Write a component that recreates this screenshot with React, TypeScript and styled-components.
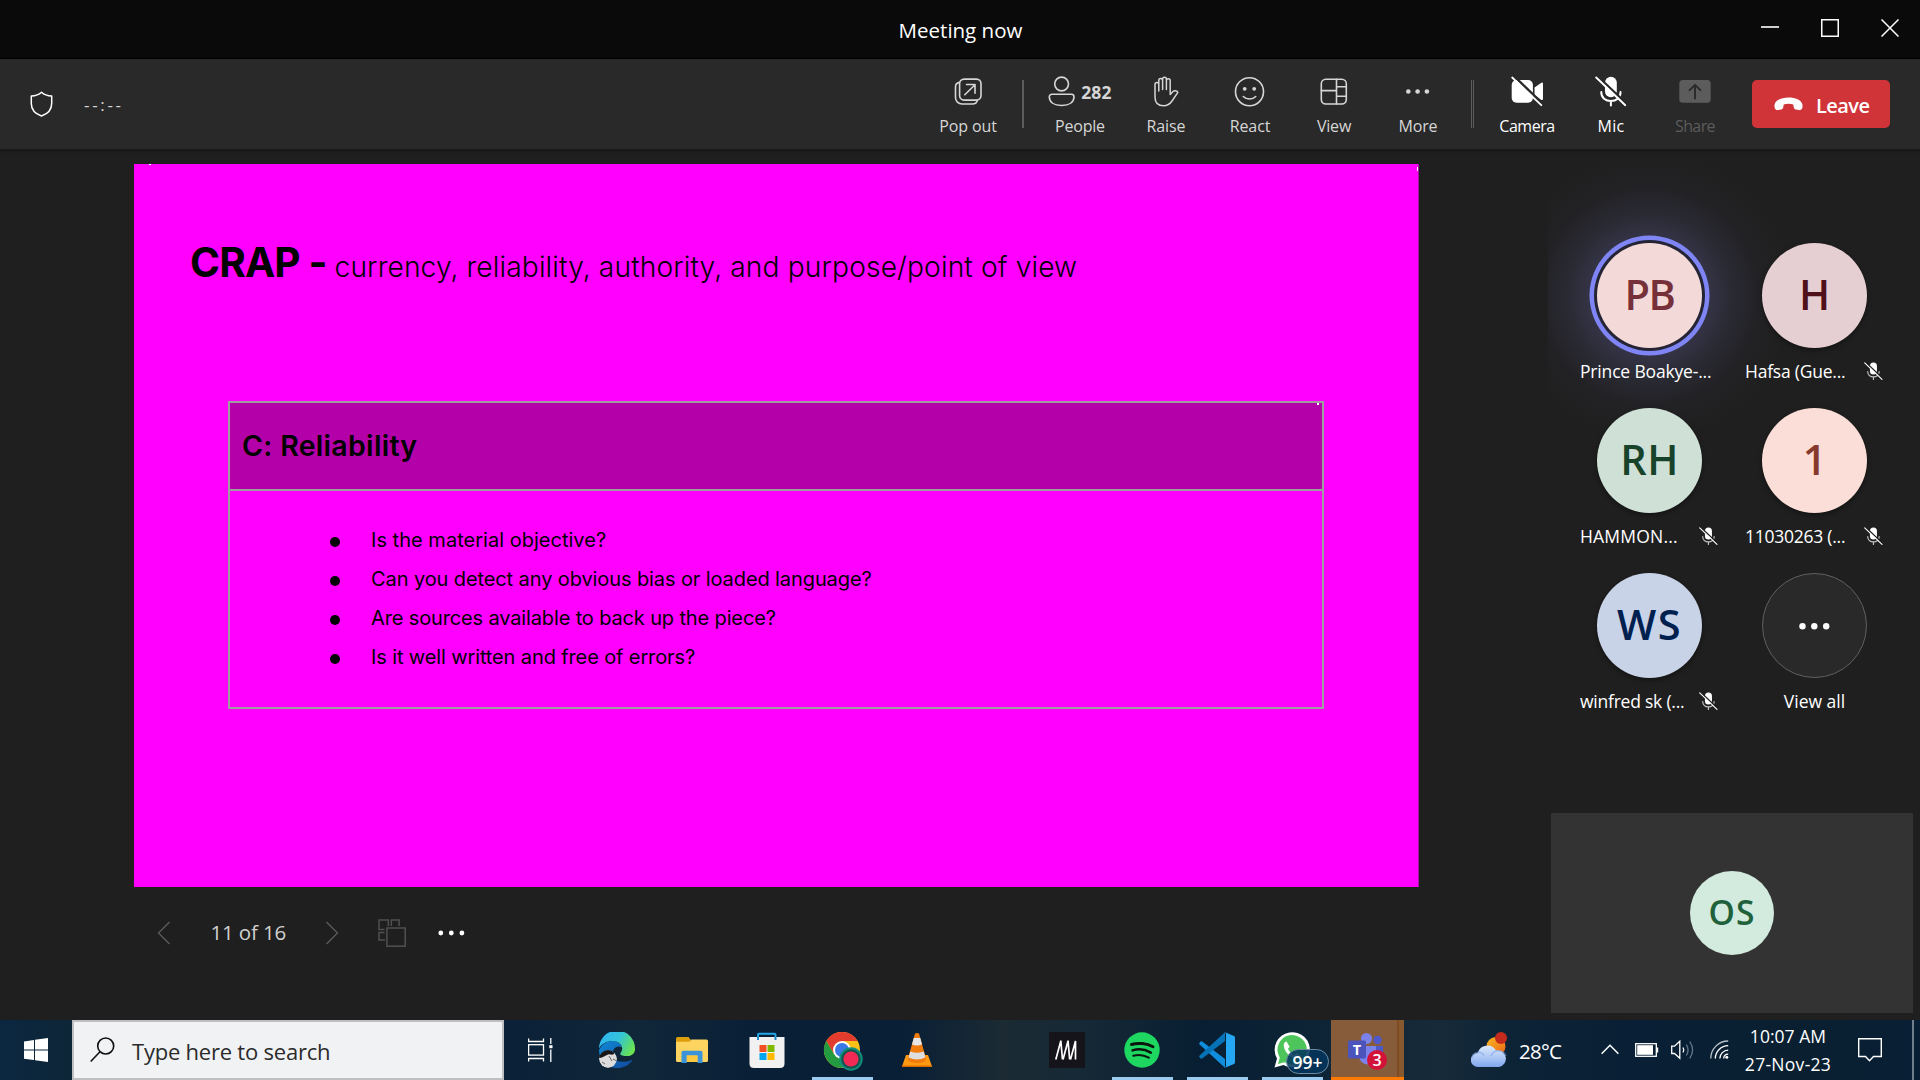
import React from 'react';
import styled, { createGlobalStyle, css } from 'styled-components';

const GlobalStyle = createGlobalStyle`
  * { box-sizing: border-box; }
  html, body { margin: 0; padding: 0; background: #1f1f1f; }
  body { font-family: "Open Sans", "Noto Sans", sans-serif; color: #fff; overflow: hidden; }
  svg { display: block; flex: none; }
`;

/* ---------- shared ---------- */

const Label = styled.span<{ $track?: number }>`
  white-space: nowrap;
  letter-spacing: ${(p) => p.$track ?? 0}px;
`;

const Screen = styled.div`
  width: 1920px;
  height: 1080px;
  display: flex;
  flex-direction: column;
`;

/* ---------- title bar ---------- */

const TitleBar = styled.header`
  height: 59px;
  flex: none;
  display: grid;
  grid-template-columns: 1fr auto 1fr;
  align-items: center;
  background: #0a0a0a;
  border-bottom: 1px solid #000;
`;

const Title = styled.h1`
  grid-column: 2;
  margin: 0;
  padding: 2px 0 0 1px;
  font-size: 20.5px;
  font-weight: 400;
  line-height: 28px;
`;

const WindowButtons = styled.div`
  display: flex;
  justify-content: flex-end;
  gap: 42px;
  padding-right: 21px;
  padding-bottom: 2px;
`;

/* ---------- toolbar ---------- */

const Toolbar = styled.div`
  height: 90px;
  flex: none;
  display: flex;
  background: #292929;
  box-shadow: 0 1px 4px rgba(0, 0, 0, 0.35);
  z-index: 1;
`;

const MeetingStatus = styled.div`
  flex: 1;
  display: flex;
  align-items: center;
  gap: 31px;
  padding-left: 30px;
`;

const Elapsed = styled(Label)`
  color: #d6d6d6;
  font-size: 17px;
  padding-top: 1px;
`;

type Tone = 'soft' | 'bright' | 'off';
const tones: Record<Tone, string> = { soft: '#d6d6d6', bright: '#ffffff', off: '#5c5c5c' };

const ToolButton = styled.div<{ $tone: Tone; $width?: number }>`
  width: ${(p) => p.$width ?? 84}px;
  padding-top: 15px;
  display: flex;
  flex-direction: column;
  align-items: center;
  gap: 5px;
  color: ${(p) => tones[p.$tone]};
  font-size: 16px;
  line-height: 22px;
`;

const IconRow = styled.div`
  height: 36px;
  display: flex;
  align-items: center;
  gap: 5px;
`;

const Count = styled(Label)`
  font-size: 17.5px;
  font-weight: 700;
`;

const Divider = styled.div<{ $double?: boolean }>`
  height: 48px;
  margin: 21px ${(p) => (p.$double ? 11 : 12)}px 0;
  ${(p) =>
    p.$double
      ? css`
          width: 3px;
          border-left: 1px solid #5c5c5c;
          border-right: 1px solid #5c5c5c;
        `
      : css`
          width: 2px;
          background: #5c5c5c;
        `}
`;

const LeaveButton = styled.div`
  width: 138px;
  height: 48px;
  margin: 21px 30px 0 15px;
  display: flex;
  align-items: center;
  gap: 13px;
  padding-left: 22px;
  border-radius: 5px;
  background: #d13438;
  font-size: 20px;
  font-weight: 600;

  ${Label} { padding-top: 2px; }
`;

/* ---------- stage ---------- */

const Main = styled.main`
  flex: 1;
  min-height: 0;
  display: grid;
  grid-template-columns: 1548px 372px;
  background: #1f1f1f;
`;

const StageColumn = styled.section`
  padding: 15px 0 0 134px;
  display: flex;
  flex-direction: column;
`;

const Slide = styled.article`
  width: 1285px;
  height: 723px;
  flex: none;
  padding-top: 69px;
  background:
    linear-gradient(#fff, #fff) 15px 0 / 2px 1px no-repeat,
    linear-gradient(#fff, #fff) 1283px 3px / 1px 4px no-repeat,
    #ff00ff;
  color: #000;
  font-family: Inter, "Open Sans", sans-serif;
  border-right: 1px solid #a80fa8;
`;

const SlideHeading = styled.div`
  height: 60px;
  display: flex;
  align-items: baseline;
  padding-left: 56px;
  line-height: 60px;
`;

const Acronym = styled.strong`
  width: 144.5px;
  flex: none;
  font-size: 40.5px;
  font-weight: 700;
  letter-spacing: -0.82px;
  white-space: nowrap;
`;

const Expansion = styled(Label)`
  font-size: 28.2px;
  font-weight: 300;
`;

const Card = styled.div`
  width: 1096px;
  height: 308px;
  margin: 108px 0 0 94px;
  border: 2px solid #9e9e9e;
`;

const CardHeader = styled.div`
  height: 88px;
  display: flex;
  align-items: center;
  padding-left: 12px;
  background: linear-gradient(#fff, #fff) 1087px 0 / 2px 2px no-repeat, #b400a8;
  border-bottom: 2px solid #9e9e9e;
  font-size: 28.5px;
  font-weight: 600;
  line-height: 30px;
`;

const Bullets = styled.ul`
  margin: 0;
  padding: 30px 0 0 100px;
  list-style: none;
`;

const Bullet = styled.li`
  display: flex;
  align-items: center;
  gap: 31px;
  font-size: 20px;
  line-height: 39px;

  &::before {
    content: '';
    width: 10px;
    height: 10px;
    margin-top: 2px;
    border-radius: 50%;
    background: #000;
  }
`;

const SlideNav = styled.nav`
  height: 92px;
  display: flex;
  align-items: center;
  padding-left: 23px;
`;

const PageCount = styled(Label)`
  width: 114px;
  margin-left: 39.5px;
  padding-bottom: 2px;
  color: #d0d0d0;
  font-size: 20.5px;
`;

const NavIcon = styled.span<{ $gap: number }>`
  margin-left: ${(p) => p.$gap}px;
`;

/* ---------- roster ---------- */

const Roster = styled.aside`
  display: flex;
  flex-direction: column;
  justify-content: space-between;
  padding: 94px 7px 7px 3px;
  background: radial-gradient(circle at 101px 147px, #353549 0, #343447 58px, #292932 85px, #222225 110px, #1f1f1f 145px);
`;

const People = styled.div`
  display: grid;
  grid-template-columns: 165px 165px;
  row-gap: 25px;
  padding-left: 16px;
`;

const Person = styled.div`
  display: flex;
  flex-direction: column;
  align-items: center;
  gap: 11px;
`;

const Avatar = styled.div<{ $bg: string; $fg: string; $speaking?: boolean; $small?: boolean }>`
  width: ${(p) => (p.$small ? 84 : 105)}px;
  height: ${(p) => (p.$small ? 84 : 105)}px;
  padding-bottom: ${(p) => (p.$small ? 0 : 1)}px;
  display: flex;
  align-items: center;
  justify-content: center;
  border-radius: 50%;
  background: ${(p) => p.$bg};
  color: ${(p) => p.$fg};
  font-size: ${(p) => (p.$small ? 33.5 : 41.5)}px;
  font-weight: 600;
  line-height: 1;
  box-shadow: ${(p) =>
    p.$small
      ? 'none'
      : p.$speaking
        ? '0 0 0 3px #242434, 0 0 0 7.5px #7f85f5'
        : '0 2px 5px rgba(0, 0, 0, 0.4)'};
`;

const MoreAvatar = styled.div`
  width: 105px;
  height: 105px;
  display: grid;
  place-items: center;
  border: 1px solid #616161;
  border-radius: 50%;
  background: #292929;
`;

const NameRow = styled.div<{ $center?: boolean }>`
  width: 138px;
  height: 24px;
  display: flex;
  align-items: center;
  justify-content: ${(p) => (p.$center ? 'center' : 'space-between')};
  margin-left: ${(p) => (p.$center ? 0 : -1)}px;
  font-size: 17.5px;
  line-height: 24px;
`;

const SelfTile = styled.div`
  height: 200px;
  display: grid;
  place-items: center;
  background: #333333;
`;

/* ---------- taskbar ---------- */

const Taskbar = styled.footer`
  height: 60px;
  flex: none;
  display: flex;
  align-items: center;
  background: linear-gradient(
    90deg, #0b2740 0, #0d2537 72px, #0b2137 520px, #10273a 640px, #081f36 760px, #081f36 900px,
    #1b2a33 1000px, #162936 1080px, #081f33 1200px, #0d2437 1320px, #172a38 1440px, #0d2437 1500px,
    #081f35 1640px, #0a2031 1800px, #081f35 1920px
  );
`;

const StartButton = styled.div`
  width: 72px;
  display: grid;
  place-items: center;
`;

const SearchBox = styled.div`
  width: 432px;
  height: 60px;
  display: flex;
  align-items: center;
  padding-left: 16px;
  gap: 16px;
  border: 2px solid #bfbfc1;
  background: #f1f2f4;
  color: #2b2b2b;
  font-size: 22px;

  ${Label} { padding-top: 1px; }
`;

const TaskViewButton = styled.div`
  width: 76px;
  padding-left: 24px;
`;

const AppButton = styled.div<{ $bar?: string; $active?: boolean }>`
  position: relative;
  width: 75px;
  height: 60px;
  display: grid;
  grid-template-rows: 57px 3px;
  justify-items: center;
  align-items: end;

  & > svg { align-self: center; margin: 3px 1px 0 0; }
  &::after {
    content: '';
    grid-row: 2;
    width: ${(p) => (p.$active ? 73 : 61)}px;
    height: 3px;
    background: ${(p) => p.$bar ?? 'transparent'};
  }
  ${(p) =>
    p.$active &&
    css`
      background: linear-gradient(
        90deg, transparent 1px, #875c3a 1px, #875c3a 67px, #7e4b22 67px, #7e4b22 69px, #87592f 69px, #87592f 74px, transparent 74px
      );
    `}
`;

const UnreadPill = styled.div`
  position: absolute;
  left: 31px;
  top: 29px;
  width: 43px;
  height: 25px;
  display: grid;
  place-items: center;
  border: 1px solid #6d8ba3;
  border-radius: 13px;
  background: rgba(3, 54, 92, 0.88);
  font-size: 17.5px;
  font-weight: 600;
  line-height: 22px;
`;

const Weather = styled.div`
  display: flex;
  align-items: center;
  gap: 12px;
  width: 130px;
  margin-left: 66px;
  font-size: 20.5px;

  ${Label} { padding-top: 2px; }
`;

const Tray = styled.div`
  display: flex;
  align-items: center;
`;

const TraySlot = styled.div<{ $width: number }>`
  width: ${(p) => p.$width}px;
`;

const Clock = styled.div`
  width: 100px;
  margin-right: 20px;
  display: flex;
  flex-direction: column;
  align-items: center;
  font-size: 17.5px;
  line-height: 28px;
`;

const ShowDesktop = styled.div`
  width: 8px;
  height: 60px;
  margin-left: 30px;
  border-left: 2px solid #6f7f8c;
`;

/* ---------- icons ---------- */

const stroke = { fill: 'none', stroke: 'currentColor', strokeLinecap: 'round', strokeLinejoin: 'round' } as const;

const MinimizeIcon = () => (
  <svg width="18" height="18" viewBox="0 0 18 18"><path d="M0 8h18" stroke="#fff" strokeWidth="1.6" /></svg>
);
const MaximizeIcon = () => (
  <svg width="18" height="18" viewBox="0 0 18 18"><rect x=".75" y=".75" width="16.5" height="16.5" fill="none" stroke="#fff" strokeWidth="1.5" /></svg>
);
const CloseIcon = () => (
  <svg width="18" height="18" viewBox="0 0 18 18"><path d="M.5.5l17 17M17.5.5l-17 17" stroke="#fff" strokeWidth="1.5" /></svg>
);
const ShieldIcon = () => (
  <svg width="23" height="26" viewBox="0 0 23 26" {...stroke} stroke="#fff" strokeWidth="1.5">
    <path d="M11.5 1.2C9.4 3.2 5.5 4.8 1.3 5v7.4c0 6 3.7 10.2 10.2 12.6 6.5-2.4 10.2-6.6 10.2-12.6V5C17.5 4.8 13.6 3.2 11.5 1.2Z" />
  </svg>
);
const PopOutIcon = () => (
  <svg width="36" height="36" viewBox="0 0 36 36" {...stroke} strokeWidth="1.6">
    <rect x="9.6" y="5.1" width="21.4" height="21" rx="4.5" />
    <path d="M9.3 8.4C6.6 8.9 5.5 10.5 5.5 13v10.5a6.5 6.5 0 0 0 6.5 6.5h10.5c2.5 0 4.3-1 4.8-3.6" />
    <path d="M14.8 20.7 25 10.8M16.5 10.5H25v8.7" />
  </svg>
);
const PeopleIcon = () => (
  <svg width="28" height="36" viewBox="0.6 0 28 36" {...stroke} strokeWidth="1.6">
    <circle cx="14.2" cy="10" r="6.9" />
    <path d="M4.5 20.2H24a2.6 2.6 0 0 1 2.6 2.6c0 5.5-5 8.700-12.400 8.700S1.900 28.300 1.900 22.800a2.600 2.600 0 0 1 2.600-2.600Z" />
  </svg>
);
const RaiseIcon = () => (
  <svg width="36" height="36" viewBox="0 0 36 36" {...stroke} strokeWidth="1.5">
    <path d="M7 10.3a1.9 1.9 0 0 1 3.8 0V17M10.8 12V6.300a1.900 1.900 0 0 1 3.800 0V15.500M14.600 10V5.200a1.900 1.900 0 0 1 3.800 0V15.500M18.400 10V6.700a1.900 1.900 0 0 1 3.800 0V20.500l2.500-2.700c1.800-1.800 4.500-1.200 5.200.6L24 27c-2.200 3.200-4 4.800-8.300 4.800-5.500 0-8.700-3-8.700-8.800V10.300" />
  </svg>
);
const ReactIcon = () => (
  <svg width="36" height="36" viewBox="0 0 36 36" {...stroke} strokeWidth="1.6">
    <circle cx="17.5" cy="17.7" r="14" />
    <path d="M11.3 22.5c3.3 3.4 9.1 3.4 12.4 0" />
    <circle cx="12.7" cy="14.8" r="1.9" fill="currentColor" stroke="none" />
    <circle cx="22.2" cy="14.8" r="1.9" fill="currentColor" stroke="none" />
  </svg>
);
const ViewIcon = () => (
  <svg width="36" height="36" viewBox="0 0 36 36" {...stroke} strokeWidth="1.6">
    <rect x="5.3" y="5.2" width="25" height="24.8" rx="4.5" />
    <path d="M20.5 5.2V30M5.3 16.6h15.2M20.5 12.7h9.8M20.5 22.2h9.8" />
  </svg>
);
const MoreIcon = () => (
  <svg width="36" height="36" viewBox="0 0 36 36" fill="currentColor">
    <circle cx="8.3" cy="17.5" r="2.3" /><circle cx="17.6" cy="17.5" r="2.3" /><circle cx="26.9" cy="17.5" r="2.3" />
  </svg>
);
const CameraOffIcon = () => (
  <svg width="36" height="36" viewBox="0 0 36 36">
    <rect x="2.7" y="6" width="21.2" height="22.7" rx="4.8" fill="#fff" />
    <path d="M25.5 13.6 32 8.9q2-1.2 2 1v14.8q0 2.200-2 1L25.500 21Z" fill="#fff" />
    <path d="M4.5 1.7 34.5 30.5" stroke="#292929" strokeWidth="2.4" />
    <path d="M3.2 3.5 32.3 31.2" stroke="#fff" strokeWidth="1.8" strokeLinecap="round" />
  </svg>
);
const MicOffIcon = ({ size = 36, bg = '#292929', thin = false }: { size?: number; bg?: string; thin?: boolean }) => (
  <svg width={size} height={size} viewBox={thin ? '2 2 32 32' : '0 0 36 36'}>
    <rect x="12" y="2.7" width="11.8" height="20.5" rx="5.9" fill="#fff" />
    <path d="M8.3 18v.6c0 5 4.2 8.5 9.6 8.5s9.6-3.5 9.6-8.5V18M17.9 27.5v4" fill="none" stroke={thin ? '#c4c4c4' : '#fff'} strokeWidth="2" strokeLinecap="round" />
    <path d="M4.7 2.3 34.5 30.5" stroke={bg} strokeWidth="2.4" />
    <path d="M3.2 3.5 32.3 31.2" stroke="#fff" strokeWidth="1.9" strokeLinecap="round" />
  </svg>
);
const ShareIcon = () => (
  <svg width="36" height="36" viewBox="0 0 36 36">
    <rect x="2.3" y="6" width="31.4" height="22.7" rx="3.5" fill="#5c5c5c" />
    <path d="M18 24.5V11M12.6 16.2 18 10.8l5.4 5.4" fill="none" stroke="#292929" strokeWidth="1.9" strokeLinecap="round" strokeLinejoin="round" />
  </svg>
);
const HangUpIcon = () => (
  <svg width="29" height="14" viewBox="0 0 29 14">
    <path d="M14.5.4C7.8.4 1.4 2.9.6 7.5c-.3 1.8-.1 3.6.6 4.6.6.9 1.7 1.3 3 1l3-.6c1.3-.3 1.9-1.2 2.1-2.5l.4-2.4c2.7-1 6.9-1 9.600 0l.4 2.400c.2 1.300.8 2.200 2.100 2.500l3 .6c1.300.3 2.400-.1 3-1 .7-1 .9-2.800.6-4.600C27.600 2.900 21.200.4 14.500.4Z" fill="#fff" />
  </svg>
);
const ChevronIcon = ({ next = false }: { next?: boolean }) => (
  <svg width="14" height="24" viewBox="0 0 14 24"><path d={next ? 'M1.5 1 12.5 12 1.5 23' : 'M12.5 1 1.5 12l11 11'} fill="none" stroke="#5c5c5c" strokeWidth="1.3" /></svg>
);
const GridIcon = () => (
  <svg width="28" height="28" viewBox="0 0 28 28" fill="none" stroke="#505050" strokeWidth="1.5">
    <path d="M6.5 10.5H1V1h9.300v6M13.300 7V1h7.800v6M6.500 13.500H1V21h6" /><rect x="8.900" y="9" width="18.300" height="18.200" />
  </svg>
);
const NavDots = () => (
  <svg width="27" height="6" viewBox="0 0 27 6" fill="#fff"><circle cx="2.8" cy="3" r="2.4" /><circle cx="13.3" cy="3" r="2.4" /><circle cx="23.9" cy="3" r="2.4" /></svg>
);
const ViewAllDots = () => (
  <svg width="32" height="8" viewBox="0 0 32 8" fill="#fff"><circle cx="3.5" cy="4.3" r="3.2" /><circle cx="15.3" cy="4.3" r="3.2" /><circle cx="27.2" cy="4.3" r="3.2" /></svg>
);
const WindowsIcon = () => (
  <svg width="24" height="24" viewBox="0 0 24 24" fill="#fff">
    <path d="M0 3.4 10 2v9.500H0ZM11 1.800 24 0v11.500H11ZM0 12.500h10v9.600L0 20.700ZM11 12.500h13V24l-13-1.800Z" />
  </svg>
);
const SearchIcon = () => (
  <svg width="26" height="26" viewBox="0 0 26 26" fill="none" stroke="#111" strokeWidth="1.6"><circle cx="15.7" cy="9" r="8" /><path d="M10 14.8.7 24.5" /></svg>
);
const TaskViewIcon = () => (
  <svg width="25" height="24" viewBox="0 0 25 24" fill="none" stroke="#fff" strokeWidth="1.3">
    <path d="M.6.5v3h14.900v-3M.6 23.500v-3h14.900v3M22.800 0v6M22.800 11.500V24" /><rect x=".6" y="6.700" width="14.900" height="10.400" />
    <rect x="21.300" y="7.200" width="3.200" height="3" fill="#fff" stroke="none" />
  </svg>
);
const EdgeIcon = () => (
  <svg width="36" height="36" viewBox="0 0 36 36">
    <defs>
      <linearGradient id="edgeTop" x1="0" y1=".3" x2="1" y2=".7"><stop offset="0" stopColor="#2fb4f0" /><stop offset=".5" stopColor="#35c4d8" /><stop offset=".8" stopColor="#55d87b" /><stop offset="1" stopColor="#6fe34c" /></linearGradient>
      <linearGradient id="edgeLow" x1="0" y1="0" x2="1" y2="1"><stop offset="0" stopColor="#0f8ad8" /><stop offset="1" stopColor="#12489c" /></linearGradient>
      <clipPath id="edgeFace"><circle cx="9" cy="27" r="9" /></clipPath>
    </defs>
    <path d="M0 18C3 12 8 9 13.500 9c5.500 0 9 3 9.300 6.500C18 12.500 12.500 17 14 23.500c1.500 6 9 8.500 19.500 4.200C30.500 33 25 36 18 36A18 18 0 0 1 0 18Z" fill="url(#edgeLow)" />
    <path d="M0 16.500A18 18 0 0 1 36 16.500c.3 4.500-2.800 7.500-8 7.500-3.500 0-6.500-.6-6.700-2-.1-1.400 1.900-2.300 1.900-5.500 0-4-4-7.500-9.700-7.500C8 9 2.500 11.500 0 16.500Z" fill="url(#edgeTop)" />
    <g clipPath="url(#edgeFace)">
      <circle cx="9" cy="27" r="9" fill="#dcdcdc" />
      <path d="M0 17h15v5c-3 2-4-1-7 1-3 1.500-5 3-8 3Z" fill="#161616" />
      <path d="M10 24l3 5M14 27l4 2M3 30l3 2" stroke="#666" strokeWidth="1" />
    </g>
  </svg>
);
const ExplorerIcon = () => (
  <svg width="32" height="26" viewBox="0 0 32 26">
    <path d="M0 1.500Q0 0 1.500 0H12.500L14.500 2.500V6H0Z" fill="#dd9e0d" />
    <path d="M0 4.700H13L15.500 2.500H30.500Q32 2.500 32 4V23.500Q32 25 30.500 25H1.500Q0 25 0 23.500Z" fill="#fdd460" />
    <path d="M5.500 26V15.500Q5.500 13.700 7.300 13.700H24.700Q26.500 13.700 26.500 15.500V26H21.500V18.500H10.800V26Z" fill="#3c94d8" />
    <rect x="10.800" y="18.500" width="10.700" height="6.500" fill="#fbc840" />
  </svg>
);
const StoreIcon = () => (
  <svg width="36" height="36" viewBox="0 0 36 36">
    <path d="M9 8V2.600Q9 1.700 10 1.700H25.500Q26.500 1.700 26.500 2.600V8" fill="none" stroke="#23a9ea" strokeWidth="1.900" />
    <path d="M.5 5.500Q.5 5 1 5H35Q35.500 5 35.500 5.500V31.500Q35.500 36 31 36H5Q.5 36 .5 31.500Z" fill="#f1f1f1" />
    <path d="M9 8V5M26.500 8V5" stroke="#1583c4" strokeWidth="1.900" />
    <path d="M10.500 13h7v7h-7Z" fill="#f25022" /><path d="M18.500 13h7v7h-7Z" fill="#7fba00" /><path d="M10.500 21h7v7h-7Z" fill="#00a4ef" /><path d="M18.500 21h7v7h-7Z" fill="#ffb900" />
  </svg>
);
const ChromeIcon = () => (
  <svg width="36" height="36" viewBox="0 0 36 36" overflow="visible">
    <circle cx="18" cy="18" r="18" fill="#fbc116" />
    <path d="M2.400 9A18 18 0 0 1 33.600 9H18L10.200 22.500Z" fill="#e33b2e" />
    <path d="M2.400 9A18 18 0 0 0 18 36L25.800 22.500H10.200Z" fill="#249a41" />
    <circle cx="18" cy="18" r="9" fill="#fff" /><circle cx="18" cy="18" r="7" fill="#3b78e7" />
    <circle cx="27" cy="27" r="11.700" fill="#0f8f7c" /><circle cx="27" cy="27" r="9.800" fill="#14564f" /><circle cx="27" cy="27" r="7.600" fill="#f02a55" />
  </svg>
);
const VlcIcon = () => (
  <svg width="32" height="36" viewBox="0 0 32 36">
    <path d="M5 23H27L31 34.500H1Z" fill="#ff9a12" /><path d="M1 33.500H31V35H1Z" fill="#d96c00" />
    <path d="M14 1.500Q16 .5 18 1.500L25.200 27Q25 31 16 31T6.800 27Z" fill="#f07c0e" />
    <path d="M12.700 6H19.300L21 12.500Q16 14.500 11 12.500Z" fill="#e6e6e6" />
    <path d="M9.300 19.500Q16 22 22.700 19.500L24.400 25.500Q16 29.500 7.600 25.500Z" fill="#dedede" />
  </svg>
);
const MonoIcon = () => (
  <svg width="36" height="36" viewBox="0 0 36 36">
    <rect width="36" height="36" fill="#16141b" />
    <path d="M6.800 27.500 11.800 9M11.800 8.500 13.500 27.500M14 27.500 19 9M19 8.500 20.700 27.500M21.500 27.500 26.500 9V27.500" fill="none" stroke="#fff" strokeWidth="1.700" />
  </svg>
);
const SpotifyIcon = () => (
  <svg width="36" height="36" viewBox="0 0 36 36" fill="none" stroke="#0a160e" strokeLinecap="round">
    <circle cx="18" cy="18" r="17.700" fill="#1ed760" stroke="none" />
    <path d="M7.500 12.500C14 10.500 23 11.300 29 14.800" strokeWidth="3" /><path d="M8.500 18.400C14 16.700 21.500 17.500 26.800 20.600" strokeWidth="2.500" /><path d="M9.300 23.700C14.500 22.300 20 22.900 24.800 25.700" strokeWidth="2.100" />
  </svg>
);
const CodeIcon = () => (
  <svg width="36" height="36" viewBox="0 0 36 36">
    <path d="M3.200 9.500 26 27V35.700L.6 12.600Q-.3 11.600.6 10.700L1.600 9.600Q2.400 9 3.200 9.500Z" fill="#118ddd" />
    <path d="M3.200 26.500 26 9V.3L.6 23.400Q-.3 24.400.6 25.300L1.600 26.400Q2.400 27 3.200 26.500Z" fill="#0672b8" />
    <path d="M26 .3 35 4Q36 4.600 36 5.800V30.200Q36 31.400 35 32L26 35.800Q27.300 34.500 27 33V3Q27.300 1.500 26 .3Z" fill="#25a7f3" />
  </svg>
);
const WhatsAppIcon = () => (
  <svg width="36" height="36" viewBox="0 0 36 36">
    <path d="M.5 35.500 3 26.500A17.600 17.600 0 1 1 9.500 33Z" fill="#fff" />
    <path d="M4 32 5.800 25.700A14.700 14.700 0 1 1 10.500 30.300Z" fill="#4dc55b" />
    <path d="M12.500 9.500c-2 .5-3 2.300-2.700 4.500 1 6.500 7 12.500 13.200 12.500 2 0 3.500-1.300 3.800-3.200l-4.300-2.300-2 2.200c-3-1.200-5.500-3.800-6.500-6.400l1.600-2Z" fill="#fff" />
  </svg>
);
const TeamsIcon = () => (
  <svg width="38" height="38" viewBox="0 0 38 38" overflow="visible">
    <circle cx="29.500" cy="9" r="4.200" fill="#5059c9" /><path d="M25 15H35V25q0 5-5 5.500l-5-1Z" fill="#5059c9" />
    <circle cx="18.500" cy="7.500" r="5.500" fill="#7b83eb" /><path d="M11 15H28V25a8.500 8.500 0 0 1-17 0Z" fill="#7b83eb" />
    <rect x="0" y="9.500" width="18" height="18" rx="1.500" fill="#4b53bc" />
    <text x="9" y="24" textAnchor="middle" fill="#fff" fontSize="14.500" fontWeight="700">T</text>
    <circle cx="29" cy="29" r="10" fill="#d3123a" />
    <text x="29" y="34.800" textAnchor="middle" fill="#fff" fontSize="16" fontWeight="600">3</text>
  </svg>
);
const WeatherIcon = () => (
  <svg width="36" height="36" viewBox="0 0 36 36">
    <defs>
      <linearGradient id="cloud" x1="0" y1="0" x2="0" y2="1"><stop offset="0" stopColor="#dbe8fb" /><stop offset=".6" stopColor="#a9c5f5" /><stop offset="1" stopColor="#7fa5ec" /></linearGradient>
      <linearGradient id="sun" x1="0" y1="0" x2="1" y2="1"><stop offset="0" stopColor="#fbb824" /><stop offset="1" stopColor="#ea6415" /></linearGradient>
    </defs>
    <circle cx="25" cy="14.500" r="9.500" fill="url(#sun)" /><circle cx="30" cy="6" r="6" fill="#c42b1c" />
    <path d="M7 35a7 7 0 0 1-.3-14A10 10 0 0 1 25 18.500 8.300 8.300 0 1 1 28 35Z" fill="url(#cloud)" />
    <path d="M1 26a6.500 6.500 0 0 1 12-2.500M20 24a8 8 0 0 1 15 0" fill="none" stroke="#7ea0e6" strokeOpacity=".55" strokeWidth="1.500" />
  </svg>
);
const CaretUpIcon = () => (
  <svg width="18" height="12" viewBox="0 0 18 12"><path d="M.6 9.800 9 1.300l8.400 8.500" fill="none" stroke="#fff" strokeWidth="1.500" /></svg>
);
const BatteryIcon = () => (
  <svg width="24" height="14" viewBox="0 0 24 14"><rect x=".7" y=".7" width="20.600" height="12.600" fill="none" stroke="#fff" strokeWidth="1.300" /><rect x="2.200" y="2.200" width="15.800" height="9.600" fill="#fff" /><rect x="21.500" y="4.500" width="1.700" height="5" fill="#fff" /></svg>
);
const SpeakerIcon = () => (
  <svg width="24" height="20" viewBox="0 0 24 20" fill="none" strokeWidth="1.300">
    <path d="M.7 6.200H3.500L8.800 1.200V18.200L3.500 13.500H.7Z" stroke="#fff" />
    <path d="M12 7.500q1.600 2.500 0 5" stroke="#fff" /><path d="M15.300 4.500q3.600 5.500 0 11M18.700 1.500q5.800 8.500 0 17" stroke="#65798a" />
  </svg>
);
const WifiIcon = () => (
  <svg width="20" height="20" viewBox="0 0 20 20" fill="none" stroke="#fff" strokeWidth="1.300">
    <path d="M.8 18.500A17.500 17.500 0 0 1 18.200 1" stroke="#b9c3cb" /><path d="M5.300 18.500A13 13 0 0 1 18.200 5.700M9.800 18.500a8.500 8.500 0 0 1 8.400-8.300M13.700 18.500a4.600 4.600 0 0 1 4.500-4.300" />
    <circle cx="16.800" cy="17.300" r="1.500" fill="#fff" stroke="none" />
  </svg>
);
const ActionCenterIcon = () => (
  <svg width="24" height="24" viewBox="0 0 24 24"><path d="M.7.7H23.300V18.500H15.500L11.500 22.800 7.500 18.500H.7Z" fill="none" stroke="#fff" strokeWidth="1.400" /></svg>
);

/* ---------- data ---------- */

interface Tool { label: string; track: number; tone: Tone; Icon: React.ComponentType }

const viewTools: Tool[] = [
  { label: 'Raise', track: -0.11, tone: 'soft', Icon: RaiseIcon },
  { label: 'React', track: -0.1, tone: 'soft', Icon: ReactIcon },
  { label: 'View', track: -0.19, tone: 'soft', Icon: ViewIcon },
  { label: 'More', track: -0.18, tone: 'soft', Icon: MoreIcon },
];

const deviceTools: Tool[] = [
  { label: 'Camera', track: -0.46, tone: 'bright', Icon: CameraOffIcon },
  { label: 'Mic', track: 0.29, tone: 'bright', Icon: MicOffIcon },
  { label: 'Share', track: -0.6, tone: 'off', Icon: ShareIcon },
];

const people = [
  { initials: 'PB', space: -1.5, name: 'Prince Boakye-...', track: -0.17, bg: '#f4d9d9', fg: '#75303a', speaking: true, muted: false },
  { initials: 'H', space: 0, name: 'Hafsa (Gue...', track: -0.23, bg: '#e6cfd2', fg: '#4f101a', speaking: false, muted: true },
  { initials: 'RH', space: 0.5, name: 'HAMMON...', track: 0.2, bg: '#cfe0d6', fg: '#18432b', speaking: false, muted: true },
  { initials: '1', space: 0, name: '11030263 (...', track: -0.25, bg: '#fbded7', fg: '#853a2b', speaking: false, muted: true },
  { initials: 'WS', space: 1.6, name: 'winfred sk (...', track: -0.23, bg: '#c8d3e8', fg: '#002050', speaking: false, muted: true },
];

const questions = [
  { text: 'Is the material objective?', track: 0.02 },
  { text: 'Can you detect any obvious bias or loaded language?', track: -0.1 },
  { text: 'Are sources available to back up the piece?', track: -0.14 },
  { text: 'Is it well written and free of errors?', track: -0.12 },
];

const running = '#9bccf0';

const ToolItem = ({ label, track, tone, Icon }: Tool) => (
  <ToolButton $tone={tone}>
    <IconRow><Icon /></IconRow>
    <Label $track={track}>{label}</Label>
  </ToolButton>
);

export default function App() {
  return (
    <Screen>
      <GlobalStyle />
      <TitleBar>
        <Title>Meeting now</Title>
        <WindowButtons><MinimizeIcon /><MaximizeIcon /><CloseIcon /></WindowButtons>
      </TitleBar>

      <Toolbar>
        <MeetingStatus>
          <ShieldIcon />
          <Elapsed $track={2.66}>--:--</Elapsed>
        </MeetingStatus>
        <ToolItem label="Pop out" track={-0.11} tone="soft" Icon={PopOutIcon} />
        <Divider />
        <ToolButton $tone="soft" $width={88}>
          <IconRow><PeopleIcon /><Count $track={0.24}>282</Count></IconRow>
          <Label $track={-0.21}>People</Label>
        </ToolButton>
        {viewTools.map((t) => <ToolItem key={t.label} {...t} />)}
        <Divider $double />
        {deviceTools.map((t) => <ToolItem key={t.label} {...t} />)}
        <LeaveButton><HangUpIcon /><Label $track={-0.54}>Leave</Label></LeaveButton>
      </Toolbar>

      <Main>
        <StageColumn>
          <Slide>
            <SlideHeading>
              <Acronym>CRAP -</Acronym>
              <Expansion $track={0.12}>currency, reliability, authority, and purpose/point of view</Expansion>
            </SlideHeading>
            <Card>
              <CardHeader><Label $track={0.3}>C: Reliability</Label></CardHeader>
              <Bullets>
                {questions.map((q) => <Bullet key={q.text}><Label $track={q.track}>{q.text}</Label></Bullet>)}
              </Bullets>
            </Card>
          </Slide>
          <SlideNav>
            <ChevronIcon />
            <PageCount $track={-0.15}>11 of 16</PageCount>
            <ChevronIcon next />
            <NavIcon $gap={39}><GridIcon /></NavIcon>
            <NavIcon $gap={32}><NavDots /></NavIcon>
          </SlideNav>
        </StageColumn>

        <Roster>
          <People>
            {people.map((p) => (
              <Person key={p.name}>
                <Avatar $bg={p.bg} $fg={p.fg} $speaking={p.speaking}><Label $track={p.space}>{p.initials}</Label></Avatar>
                <NameRow>
                  <Label $track={p.track}>{p.name}</Label>
                  {p.muted && <MicOffIcon size={19} bg="#1f1f1f" thin />}
                </NameRow>
              </Person>
            ))}
            <Person>
              <MoreAvatar><ViewAllDots /></MoreAvatar>
              <NameRow $center>View all</NameRow>
            </Person>
          </People>
          <SelfTile>
            <Avatar $bg="#d2ebde" $fg="#1e613b" $small><Label $track={1.2}>OS</Label></Avatar>
          </SelfTile>
        </Roster>
      </Main>

      <Taskbar>
        <StartButton><WindowsIcon /></StartButton>
        <SearchBox><SearchIcon /><Label $track={-0.22}>Type here to search</Label></SearchBox>
        <TaskViewButton><TaskViewIcon /></TaskViewButton>
        <AppButton><EdgeIcon /></AppButton>
        <AppButton><ExplorerIcon /></AppButton>
        <AppButton><StoreIcon /></AppButton>
        <AppButton $bar={running}><ChromeIcon /></AppButton>
        <AppButton><VlcIcon /></AppButton>
        <AppButton />
        <AppButton><MonoIcon /></AppButton>
        <AppButton $bar={running}><SpotifyIcon /></AppButton>
        <AppButton $bar={running}><CodeIcon /></AppButton>
        <AppButton $bar={running}><WhatsAppIcon /><UnreadPill>99+</UnreadPill></AppButton>
        <AppButton $bar="#ff7a00" $active><TeamsIcon /></AppButton>
        <Weather><WeatherIcon /><Label $track={-0.74}>28°C</Label></Weather>
        <Tray>
          <TraySlot $width={34}><CaretUpIcon /></TraySlot>
          <TraySlot $width={36}><BatteryIcon /></TraySlot>
          <TraySlot $width={39}><SpeakerIcon /></TraySlot>
          <TraySlot $width={28}><WifiIcon /></TraySlot>
          <Clock><Label $track={0.04}>10:07 AM</Label><Label $track={0.28}>27-Nov-23</Label></Clock>
          <ActionCenterIcon />
        </Tray>
        <ShowDesktop />
      </Taskbar>
    </Screen>
  );
}
